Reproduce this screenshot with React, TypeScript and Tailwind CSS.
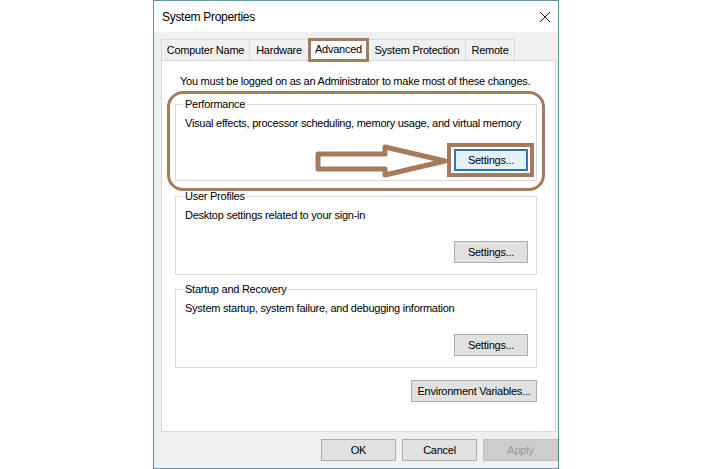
const font = { fontFamily: '"Liberation Sans", Arial, sans-serif' };

function WinButton({
  label,
  width = 'w-[74px]',
  focused = false,
  disabled = false,
}: {
  label: string;
  width?: string;
  focused?: boolean;
  disabled?: boolean;
}) {
  let cls = 'border border-[#adadad] bg-[#e1e1e1] text-black';
  if (focused) cls = 'border-2 border-[#2f74b4] bg-[#e5f1fb] text-black';
  if (disabled) cls = 'border border-[#bfbfbf] bg-[#cccccc] text-[#9a9a9a]';
  return (
    <button className={`${width} h-[22px] ${cls} flex items-center justify-center leading-none`}>
      {label}
    </button>
  );
}

function GroupBox({
  title,
  text,
  height,
  focused = false,
}: {
  title: string;
  text: string;
  height: string;
  focused?: boolean;
}) {
  return (
    <fieldset className={`w-[362px] ${height} border border-[#dcdcdc] flex flex-col`}>
      <legend className="ml-[7px] px-[2px] leading-[15px]">{title}</legend>
      <div className="pl-[9px] pt-[4px] leading-[15px]">{text}</div>
      <div className="flex justify-end pr-[8px] mt-[18px]">
        {focused ? (
          <span className="relative">
            <WinButton label="Settings..." focused />
            <span className="absolute -left-[7px] -right-[6px] -top-[6px] -bottom-[6px] border-[4px] border-[#a67a5c]" />
          </span>
        ) : (
          <WinButton label="Settings..." />
        )}
      </div>
    </fieldset>
  );
}

const tabs = [
  { name: 'Computer Name', w: 'w-[89px]' },
  { name: 'Hardware', w: 'w-[60px]' },
  { name: 'Advanced', w: 'w-[61px]', active: true },
  { name: 'System Protection', w: 'w-[98px]' },
  { name: 'Remote', w: 'w-[50px]' },
];

export default function App() {
  return (
    <div
      className="relative w-[726px] h-[469px] bg-white text-[11px] tracking-[-0.25px] text-black overflow-hidden"
      style={font}
    >
      <div className="ml-[153px] w-[406px] h-[469px] border border-[#5f98a3] flex flex-col">
        {/* title bar */}
        <div className="h-[31px] bg-white flex items-center justify-between pl-[8px] pr-[5px]">
          <span className="text-[12px] tracking-[-0.3px]">System Properties</span>
          <svg width="14" height="14" viewBox="0 0 14 14" className="mr-[1px]">
            <path d="M2 2 L12 12 M12 2 L2 12" stroke="#222" strokeWidth="1" />
          </svg>
        </div>

        {/* body */}
        <div className="flex-1 bg-[#f0f0f0] pl-[7px] pr-[2px] pt-[6px] flex flex-col">
          <div className="flex items-end h-[22px]">
            {tabs.map((t, i) =>
              t.active ? (
                <div
                  key={t.name}
                  className={`${t.w} h-[24px] -mb-[2px] -ml-px relative z-10 bg-white border-[3px] border-[#a67a5c] flex items-center justify-center pb-[1px]`}
                >
                  {t.name}
                </div>
              ) : (
                <div
                  key={t.name}
                  className={`${t.w} h-[21px] ${i === 0 ? '' : '-ml-px'} bg-[#f0f0f0] border border-b-0 border-[#d9d9d9] flex items-center justify-center pt-[1px]`}
                >
                  {t.name}
                </div>
              ),
            )}
          </div>

          <div className="w-[395px] h-[372px] bg-white border border-[#d9d9d9] pl-[13px] pt-[13px] flex flex-col">
            <div className="ml-[5px] leading-[15px]">
              You must be logged on as an Administrator to make most of these changes.
            </div>
            <div className="mt-[8px] flex flex-col">
              <GroupBox
                title="Performance"
                text="Visual effects, processor scheduling, memory usage, and virtual memory"
                height="h-[84px]"
                focused
              />
              <div className="mt-[8px]">
                <GroupBox
                  title="User Profiles"
                  text="Desktop settings related to your sign-in"
                  height="h-[86px]"
                />
              </div>
              <div className="mt-[7px]">
                <GroupBox
                  title="Startup and Recovery"
                  text="System startup, system failure, and debugging information"
                  height="h-[86px]"
                />
              </div>
            </div>
            <div className="w-[362px] flex justify-end mt-[12px]">
              <WinButton label="Environment Variables..." width="w-[126px]" />
            </div>
          </div>

          <div className="flex justify-end gap-[6px] mt-[7px] -mr-[2px]">
            <WinButton label="OK" width="w-[75px]" />
            <WinButton label="Cancel" width="w-[75px]" />
            <WinButton label="Apply" width="w-[75px]" disabled />
          </div>
        </div>
      </div>

      {/* annotation: rounded highlight around Performance */}
      <div className="absolute left-[167px] top-[91px] w-[378px] h-[100px] border-[3px] border-[#a67a5c] rounded-[16px] pointer-events-none" />

      {/* annotation: arrow */}
      <svg className="absolute left-0 top-0 pointer-events-none" width="726" height="469">
        <polygon
          points="318,154 385,154 385,147 445,161 385,175 385,169 318,169"
          fill="white"
          stroke="#a67a5c"
          strokeWidth="5"
          strokeLinejoin="round"
        />
      </svg>
    </div>
  );
}
